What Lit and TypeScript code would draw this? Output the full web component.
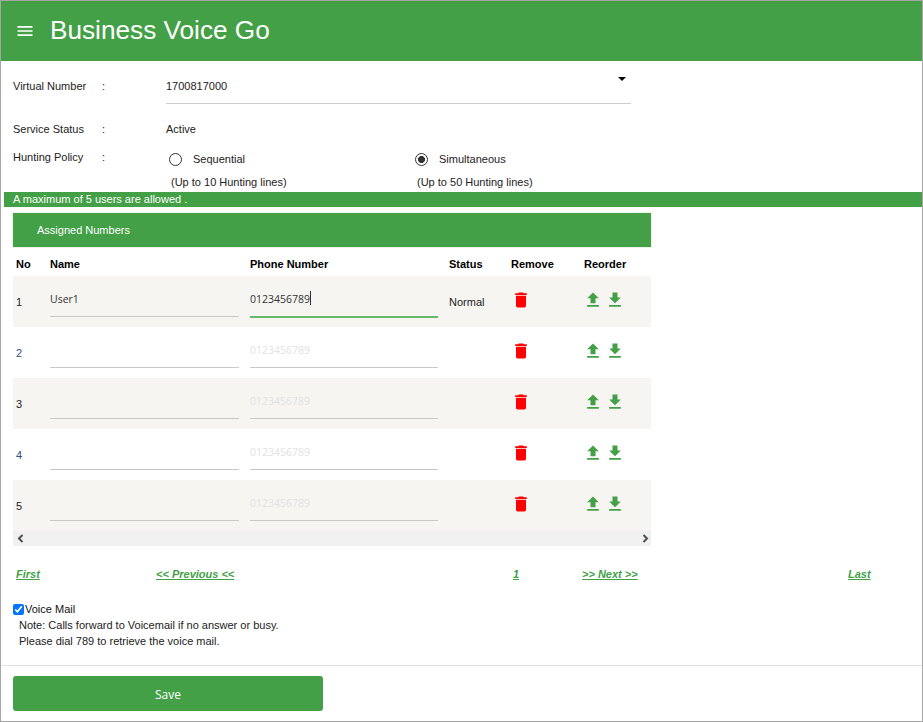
import { LitElement, html, css, svg } from "lit";
import { customElement } from "lit/decorators.js";

const P = {
  menu: "M3 18h18v-2H3v2zm0-5h18v-2H3v2zm0-7v2h18V6H3z",
  del: "M6 19c0 1.1.9 2 2 2h8c1.1 0 2-.9 2-2V7H6v12zM19 4h-3.5l-1-1h-5l-1 1H5v2h14V4z",
  up: "M9 16h6v-6h4l-7-7-7 7h4zm-4 2h14v2H5z",
  down: "M19 9h-4V3H9v6H5l7 7 7-7zM5 18v2h14v-2H5z",
};
const icon = (d: string, cls: string) => html`<svg class=${cls} viewBox="0 0 24 24" width="20" height="20">${svg`<path d=${d}></path>`}</svg>`;

const rows = [
  { n: 1, name: "User1", phone: "0123456789", status: "Normal" },
  { n: 2, name: "", phone: "", status: "" },
  { n: 3, name: "", phone: "", status: "" },
  { n: 4, name: "", phone: "", status: "" },
  { n: 5, name: "", phone: "", status: "" },
];

@customElement("app-root")
export class AppRoot extends LitElement {
  static styles = css`
    :host { display: block; width: 923px; height: 722px; font-family: "Liberation Sans", Arial, sans-serif; font-size: 11px; color: #222; }
    * { box-sizing: border-box; }
    .frame { width: 923px; height: 722px; border: 1px solid #a6a6a6; background: #fff; display: flex; flex-direction: column; overflow: hidden; }
    .appbar { height: 60px; flex: none; background: #43a047; color: #fff; display: flex; align-items: center; padding-left: 14px; gap: 15px; padding-bottom: 1px; }
    .appbar svg { fill: #fff; }
    .title { font-family: "Liberation Sans", Roboto, sans-serif; font-size: 26.2px; line-height: 30px; margin-top: -1px; }
    .form { padding: 0 0 0 12px; display: grid; grid-template-columns: 89px 64px 1fr; }
    .lbl, .colon, .val { display: flex; align-items: center; }
    .r1 { height: 43px; }
    .lbl.r1, .colon.r1 { padding-top: 6px; }
    .vn { width: 465px; height: 43px; border-bottom: 1px solid #cfcfcf; display: flex; align-items: center; justify-content: space-between; padding-right: 5px; padding-top: 8px; }
    .caret-down { width: 0; height: 0; border-left: 4px solid transparent; border-right: 4px solid transparent; border-top: 4px solid #000; margin-top: -14px; }
    .r2 { margin-top: 15px; height: 20px; }
    .r3 { margin-top: 12px; align-items: flex-start; }
    .lbl.top, .colon.top { height: 20px; }
    .policy { display: grid; grid-template-columns: 246px 240px; margin-top: 12px; margin-left: 3px; }
    .opt { display: flex; align-items: center; gap: 11px; height: 16px; }
    .opt input { appearance: none; width: 13px; height: 13px; margin: 0; border: 1.3px solid #333; border-radius: 50%; background: #fff; flex: none; }
    .opt input:checked { background: radial-gradient(circle, #333 0 3.2px, #fff 3.8px); }
    .sub { margin: 8px 0 0 2px; line-height: 14px; }
    .notice { margin: 3px 0 0 3px; height: 15px; background: #43a047; color: #fff; padding-left: 9px; line-height: 15px; flex: none; }
    .table { margin: 6px 0 0 12px; width: 638px; flex: none; }
    .panel { height: 34px; background: #43a047; color: #fff; display: flex; align-items: center; padding-left: 24px; box-shadow: 0 0 1px #8bc48e; }
    .grid { display: grid; grid-template-columns: 34px 200px 199px 62px 73px 70px; }
    .cell { padding-left: 3px; display: flex; align-items: center; }
    .head { height: 29px; font-weight: bold; color: #000; padding-top: 4px; }
    .row { height: 51px; }
    .row.odd { background: #f6f5f2; }
    .no { padding-top: 1px; }
    .row:not(.odd) .no { color: #2a4f7c; }
    .field { position: relative; width: 189px; height: 41px; margin-bottom: 0; align-self: flex-start; border-bottom: 1px solid #cbc9c5; }
    .field.ph { width: 188px; }
    .field.focus { border-bottom: 2px solid #66bb6a; height: 42px; }
    .field input { width: 100%; height: 29px; margin-top: 8px; border: 0; padding: 0; outline: 0; background: transparent; display: block; font-family: "Open Sans", "Noto Sans", sans-serif; font-size: 10.5px; color: #333; }
    .field input::placeholder { color: #e2e2e2; opacity: 1; }
    .tcaret { position: absolute; left: 60px; top: 15px; width: 1px; height: 14px; background: #333; }
    .status { padding-top: 1px; }
    .trash { fill: #f00; display: block; }
    .act { gap: 2px; padding-left: 2px; padding-bottom: 3px; }
    .rm { padding-bottom: 3px; }
    .act svg { fill: #43a047; display: block; }
    .scroll { height: 15px; background: #f0f0f0; display: flex; justify-content: space-between; align-items: center; padding: 0 2px 0 4px; }
    .scroll svg { display: block; fill: none; stroke: #505050; stroke-width: 2; }
    .pager { margin: 21px 0 0 12px; display: grid; grid-template-columns: 140px 357px 69px 266px auto; height: 14px; align-items: center; }
    .pager a { color: #43a047; font-weight: bold; font-style: italic; text-decoration: underline; margin-left: 3px; }
    .vm { margin: 20px 0 0 12px; }
    .vm label { display: flex; align-items: center; height: 16px; color: #111; }
    .vm input { width: 11px; height: 11px; margin: 0 1px 0 0; flex: none; }
    .note { margin-left: 6px; line-height: 16px; }
    .foot { margin-top: 16px; border-top: 1px solid #e0e0e0; padding: 10px 0 0 12px; flex: none; }
    .save { display: block; width: 310px; height: 35px; border: 0; border-radius: 3px; background: #43a047; color: #fff; font-family: "Open Sans", "Noto Sans", sans-serif; font-size: 12px; padding: 2px 0 0; }
  `;

  render() {
    return html`<div class="frame">
      <header class="appbar">${icon(P.menu, "menu")}<div class="title">Business Voice Go</div></header>
      <section class="form">
        <div class="lbl r1">Virtual Number</div><div class="colon r1">:</div>
        <div class="val r1"><div class="vn"><span>1700817000</span><span class="caret-down"></span></div></div>
        <div class="lbl r2">Service Status</div><div class="colon r2">:</div><div class="val r2">Active</div>
        <div class="lbl r3 top">Hunting Policy</div><div class="colon r3 top">:</div>
        <div class="r3 policy">
          <div><label class="opt"><input type="radio" name="p" />Sequential</label><div class="sub">(Up to 10 Hunting lines)</div></div>
          <div><label class="opt"><input type="radio" name="p" checked />Simultaneous</label><div class="sub">(Up to 50 Hunting lines)</div></div>
        </div>
      </section>
      <div class="notice">A maximum of 5 users are allowed .</div>
      <section class="table">
        <div class="panel">Assigned Numbers</div>
        <div class="grid head">
          ${["No", "Name", "Phone Number", "Status", "Remove", "Reorder"].map((h) => html`<div class="cell">${h}</div>`)}
        </div>
        ${rows.map((r) => html`<div class="grid row ${r.n % 2 ? "odd" : ""}">
          <div class="cell no">${r.n}</div>
          <div class="cell"><div class="field"><input .value=${r.name} /></div></div>
          <div class="cell"><div class="field ph ${r.n === 1 ? "focus" : ""}"><input placeholder="0123456789" .value=${r.phone} />${r.n === 1 ? html`<span class="tcaret"></span>` : ""}</div></div>
          <div class="cell status">${r.status}</div>
          <div class="cell rm">${icon(P.del, "trash")}</div>
          <div class="cell act">${icon(P.up, "")}${icon(P.down, "")}</div>
        </div>`)}
        <div class="scroll">
          <svg width="7" height="9" viewBox="0 0 7 9"><path d="M5.5 1 2 4.5 5.5 8"></path></svg>
          <svg width="7" height="9" viewBox="0 0 7 9"><path d="M1.5 1 5 4.5 1.5 8"></path></svg>
        </div>
      </section>
      <nav class="pager">
        <div><a>First</a></div><div><a>&lt;&lt; Previous &lt;&lt;</a></div><div><a>1</a></div><div><a>&gt;&gt; Next &gt;&gt;</a></div><div><a>Last</a></div>
      </nav>
      <section class="vm">
        <label><input type="checkbox" checked />Voice Mail</label>
        <div class="note">Note: Calls forward to Voicemail if no answer or busy.<br />Please dial 789 to retrieve the voice mail.</div>
      </section>
      <footer class="foot"><button class="save">Save</button></footer>
    </div>`;
  }
}
